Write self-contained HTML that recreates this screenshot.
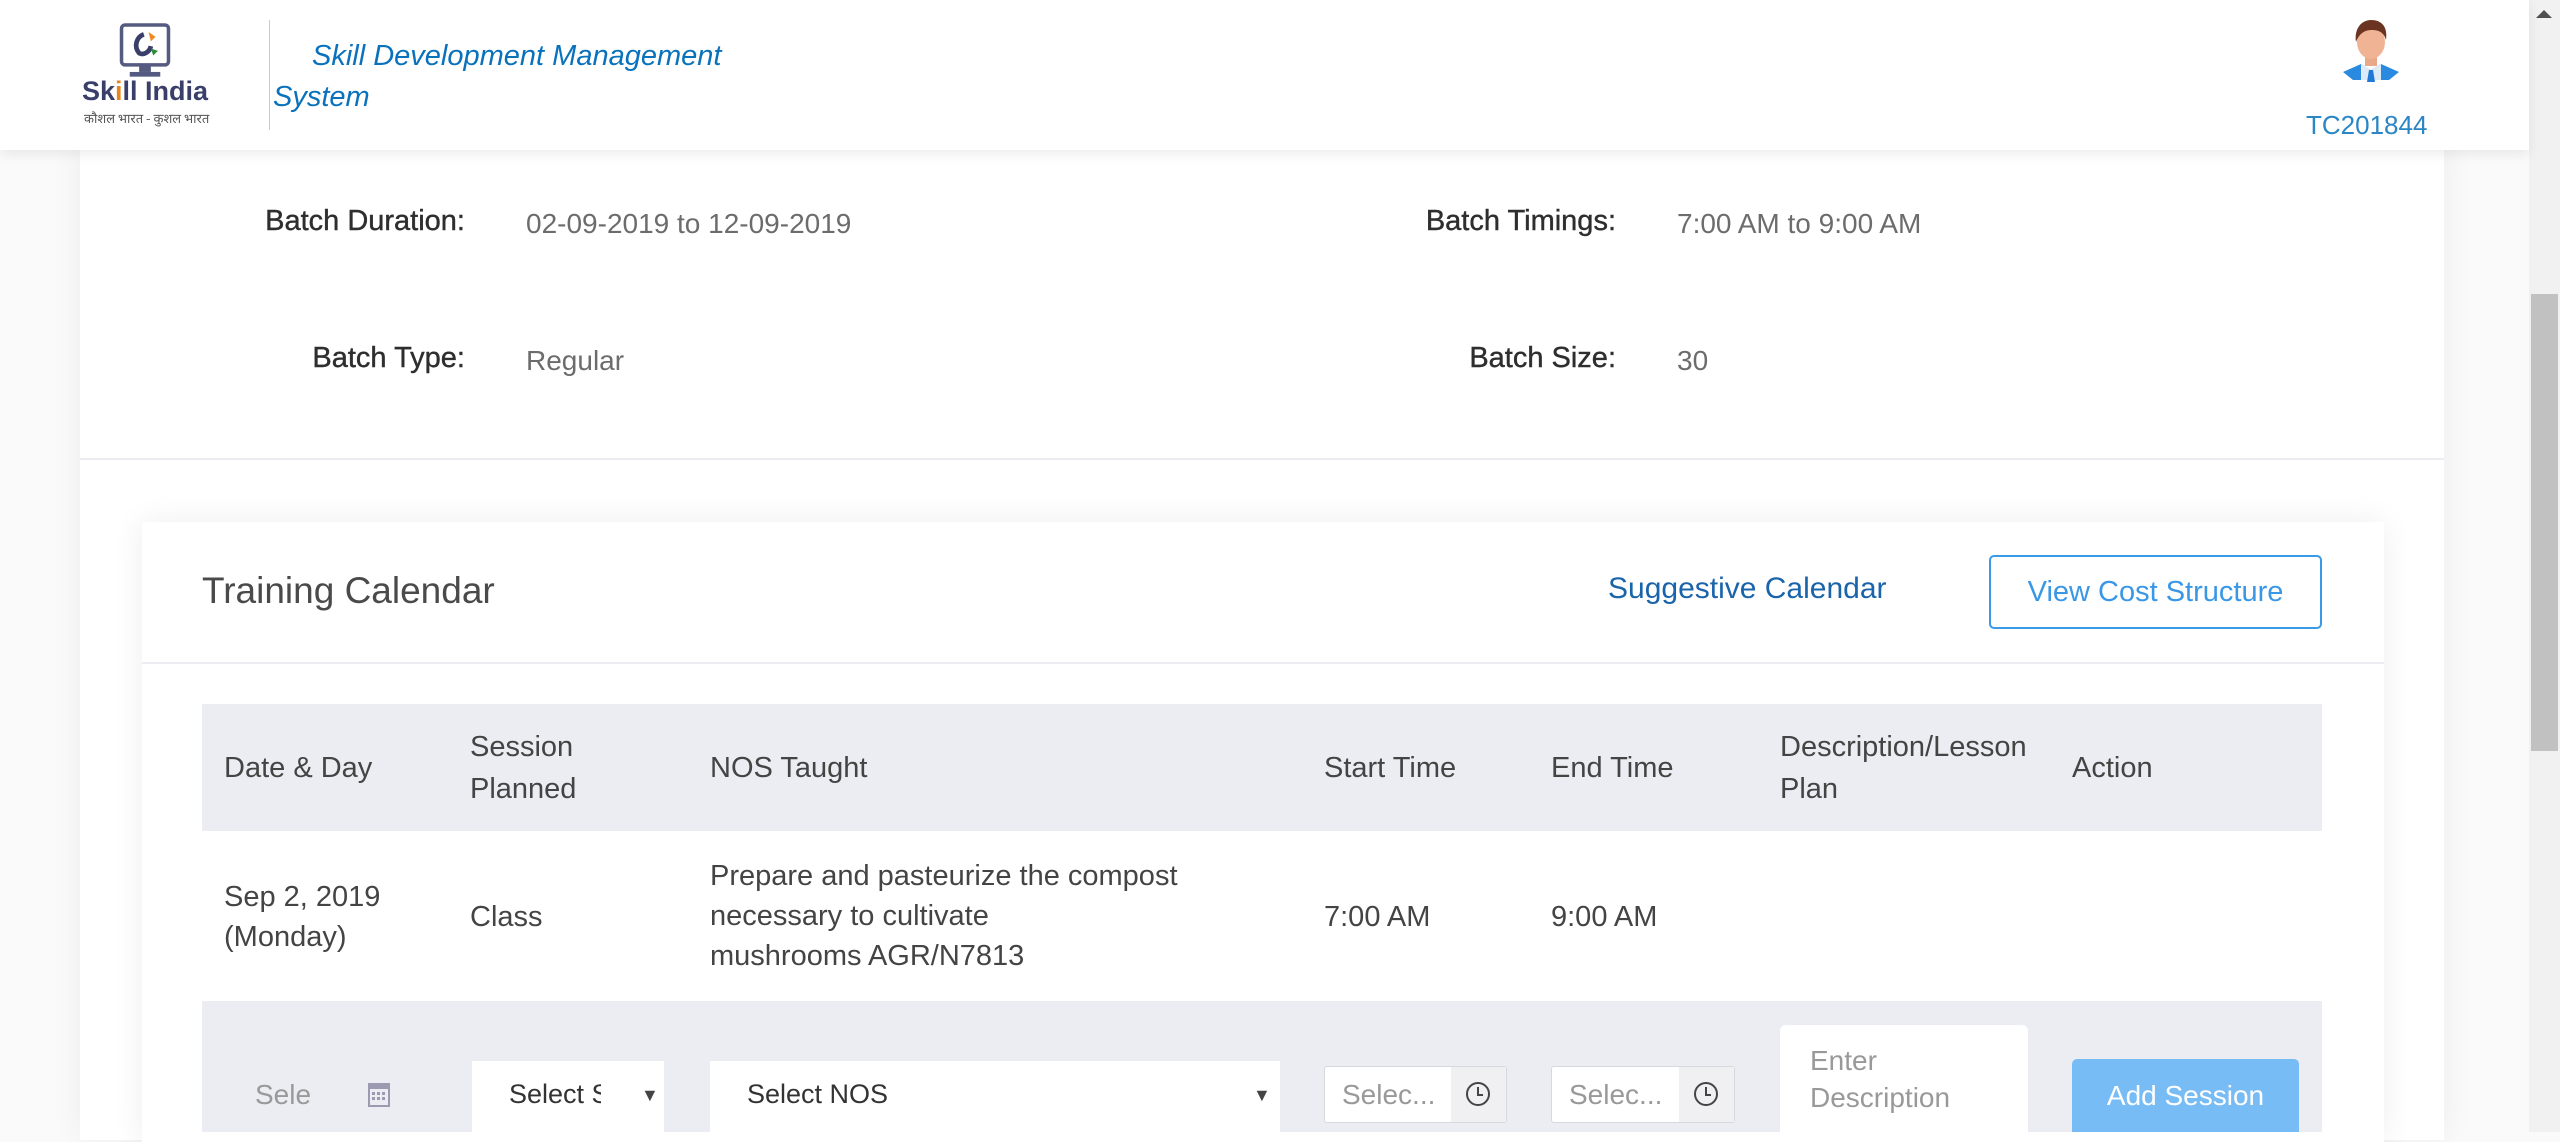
<!DOCTYPE html>
<html><head><meta charset="utf-8"><style>
*{box-sizing:border-box;margin:0;padding:0}
body{width:2560px;height:1132px;overflow:hidden;background:#fafafa;font-family:"Liberation Sans",sans-serif;position:relative}
.abs{position:absolute}
.hdr{left:0;top:0;width:2529px;height:150px;background:#fff;box-shadow:0 4px 12px rgba(0,0,0,.08);z-index:5}
.card{left:80px;top:140px;width:2364px;height:1000px;background:#fff;box-shadow:0 0 30px rgba(0,0,0,.06)}
.lbl{font-size:29px;color:#2e2e2e;text-align:right;width:400px;-webkit-text-stroke:0.4px #2e2e2e}
.val{font-size:28px;color:#6c6c6c}
.inner{left:142px;top:522px;width:2242px;height:620px;background:#fff;box-shadow:0 0 30px rgba(0,0,0,.07)}
.th{font-size:29px;color:#444;line-height:42px}
.td{font-size:29px;color:#444;line-height:40px}
.box{background:#fff}
.ph{font-size:28px;color:#999}
</style></head><body>
<div class="abs hdr">
  <svg class="abs" style="left:118px;top:22px" width="54" height="60" viewBox="0 0 46 50"><rect x="3" y="2" width="40" height="34" rx="3" fill="none" stroke="#555a80" stroke-width="3"/><path d="M22 10c-6 2-9 10-4 16 4 2 9-1 10-6" fill="none" stroke="#3a3f6a" stroke-width="4"/><path d="M26 8l6 4-4 4" fill="#f08a24"/><path d="M28 22l6 2-4 4" fill="#2e8b3a"/><rect x="18" y="36" width="10" height="6" fill="#555a80"/><rect x="10" y="42" width="26" height="4" fill="#555a80"/></svg>
  <div class="abs" style="left:82px;top:76px;font-size:27px;font-weight:bold;color:#3a3f6a">Sk<span style="color:#e8861e">i</span>ll India</div>
  <div class="abs" style="left:84px;top:108px;font-size:13px;color:#555;font-family:'Noto Sans CJK SC',sans-serif">कौशल भारत - कुशल भारत</div>
  <div class="abs" style="left:269px;top:20px;width:1px;height:110px;background:#ccc"></div>
  <div class="abs" style="left:312px;top:40px;font-size:29px;font-style:italic;color:#0a72bc">Skill Development Management</div>
  <div class="abs" style="left:273px;top:81px;font-size:29px;font-style:italic;color:#0a72bc">System</div>
  <svg class="abs" style="left:2341px;top:16px" width="60" height="70" viewBox="0 0 60 70"><path d="M2 56l18-8 10 6 10-6 18 8-10 8H12z" fill="#2a8ae0"/><path d="M20 48l10 6 10-6v16H20z" fill="#dcebf7"/><path d="M28 54h4l2 12h-8z" fill="#1f7ad6"/><rect x="24" y="38" width="12" height="12" fill="#e9a888"/><ellipse cx="30" cy="26" rx="14" ry="17" fill="#f0b494"/><path d="M15 26c-2-14 6-22 15-22 10 0 17 6 15 20-2-8-8-10-14-10-6 0-12 2-16 12z" fill="#6b3422"/></svg>
  <div class="abs" style="left:2306px;top:110px;font-size:26px;color:#2a86c4">TC201844</div>
</div>
<div class="abs" style="left:2529px;top:0;width:31px;height:1132px;background:#f1f1f1"></div>
<div class="abs" style="left:2531px;top:294px;width:27px;height:457px;background:#c1c1c1"></div>
<div class="abs" style="left:2536px;top:10px;width:0;height:0;border-left:8px solid transparent;border-right:8px solid transparent;border-bottom:8px solid #505050"></div>

<div class="abs card"></div>
<div class="abs lbl" style="left:65px;top:205px">Batch Duration:</div>
<div class="abs val" style="left:526px;top:208px">02-09-2019 to 12-09-2019</div>
<div class="abs lbl" style="left:1216px;top:205px">Batch Timings:</div>
<div class="abs val" style="left:1677px;top:208px">7:00 AM to 9:00 AM</div>
<div class="abs lbl" style="left:65px;top:342px">Batch Type:</div>
<div class="abs val" style="left:526px;top:345px">Regular</div>
<div class="abs lbl" style="left:1216px;top:342px">Batch Size:</div>
<div class="abs val" style="left:1677px;top:345px">30</div>
<div class="abs" style="left:80px;top:458px;width:2364px;height:2px;background:#ebedf2"></div>

<div class="abs inner"></div>
<div class="abs" style="left:202px;top:570px;font-size:37px;color:#4a4a4a">Training Calendar</div>
<div class="abs" style="left:1608px;top:572px;font-size:30px;color:#1a64ab">Suggestive Calendar</div>
<div class="abs" style="left:1989px;top:555px;width:333px;height:74px;border:2px solid #3a9ae8;border-radius:5px;font-size:29px;color:#3a97e6;text-align:center;line-height:70px">View Cost Structure</div>
<div class="abs" style="left:142px;top:662px;width:2242px;height:2px;background:#ebedf2"></div>

<div class="abs" style="left:202px;top:704px;width:2120px;height:127px;background:#ebedf2"></div>
<div class="abs th" style="left:224px;top:747px">Date &amp; Day</div>
<div class="abs th" style="left:470px;top:726px">Session<br>Planned</div>
<div class="abs th" style="left:710px;top:747px">NOS Taught</div>
<div class="abs th" style="left:1324px;top:747px">Start Time</div>
<div class="abs th" style="left:1551px;top:747px">End Time</div>
<div class="abs th" style="left:1780px;top:726px">Description/Lesson<br>Plan</div>
<div class="abs th" style="left:2072px;top:747px">Action</div>

<div class="abs td" style="left:224px;top:877px">Sep 2, 2019<br>(Monday)</div>
<div class="abs td" style="left:470px;top:897px">Class</div>
<div class="abs td" style="left:710px;top:856px">Prepare and pasteurize the compost<br>necessary to cultivate<br>mushrooms AGR/N7813</div>
<div class="abs td" style="left:1324px;top:897px">7:00 AM</div>
<div class="abs td" style="left:1551px;top:897px">9:00 AM</div>

<div class="abs" style="left:202px;top:1001px;width:2120px;height:131px;background:#ebedf2"></div>
<div class="abs ph" style="left:255px;top:1079px">Sele</div>
<svg class="abs" style="left:368px;top:1081px" width="22" height="26" viewBox="0 0 22 26"><rect x="1" y="3" width="20" height="22" fill="none" stroke="#9a9ab0" stroke-width="2"/><rect x="1" y="3" width="20" height="5" fill="#9a9ab0"/><g fill="#9a9ab0"><rect x="4" y="11" width="3" height="3"/><rect x="9" y="11" width="3" height="3"/><rect x="14" y="11" width="3" height="3"/><rect x="4" y="16" width="3" height="3"/><rect x="9" y="16" width="3" height="3"/><rect x="14" y="16" width="3" height="3"/></g></svg>
<div class="abs box" style="left:472px;top:1061px;width:192px;height:71px"></div>
<div class="abs" style="left:509px;top:1079px;width:92px;overflow:hidden;white-space:nowrap;font-size:27px;color:#333">Select Session</div>
<div class="abs" style="left:641px;top:1085px;font-size:18px;color:#444">▼</div>
<div class="abs box" style="left:710px;top:1061px;width:570px;height:71px"></div>
<div class="abs" style="left:747px;top:1079px;font-size:27px;color:#333">Select NOS</div>
<div class="abs" style="left:1253px;top:1085px;font-size:18px;color:#444">▼</div>

<div class="abs box" style="left:1324px;top:1066px;width:183px;height:57px;border:1px solid #d6d8de;border-radius:3px"></div>
<div class="abs" style="left:1451px;top:1067px;width:55px;height:55px;background:#f0f0f2"></div>
<div class="abs ph" style="left:1342px;top:1079px">Selec...</div>
<svg class="abs" style="left:1465px;top:1081px" width="26" height="26"><circle cx="13" cy="13" r="11" fill="none" stroke="#444" stroke-width="2"/><path d="M13 6v8h5" fill="none" stroke="#444" stroke-width="2"/></svg>
<div class="abs box" style="left:1551px;top:1066px;width:184px;height:57px;border:1px solid #d6d8de;border-radius:3px"></div>
<div class="abs" style="left:1679px;top:1067px;width:55px;height:55px;background:#f0f0f2"></div>
<div class="abs ph" style="left:1569px;top:1079px">Selec...</div>
<svg class="abs" style="left:1693px;top:1081px" width="26" height="26"><circle cx="13" cy="13" r="11" fill="none" stroke="#444" stroke-width="2"/><path d="M13 6v8h5" fill="none" stroke="#444" stroke-width="2"/></svg>

<div class="abs box" style="left:1780px;top:1025px;width:248px;height:107px;border-radius:6px 6px 0 0"></div>
<div class="abs ph" style="left:1810px;top:1042px;line-height:37px">Enter<br>Description</div>
<div class="abs" style="left:2072px;top:1059px;width:227px;height:73px;background:#78bcf5;border-radius:5px 5px 0 0;color:#fff;font-size:28px;text-align:center;line-height:74px">Add Session</div>
</body></html>
